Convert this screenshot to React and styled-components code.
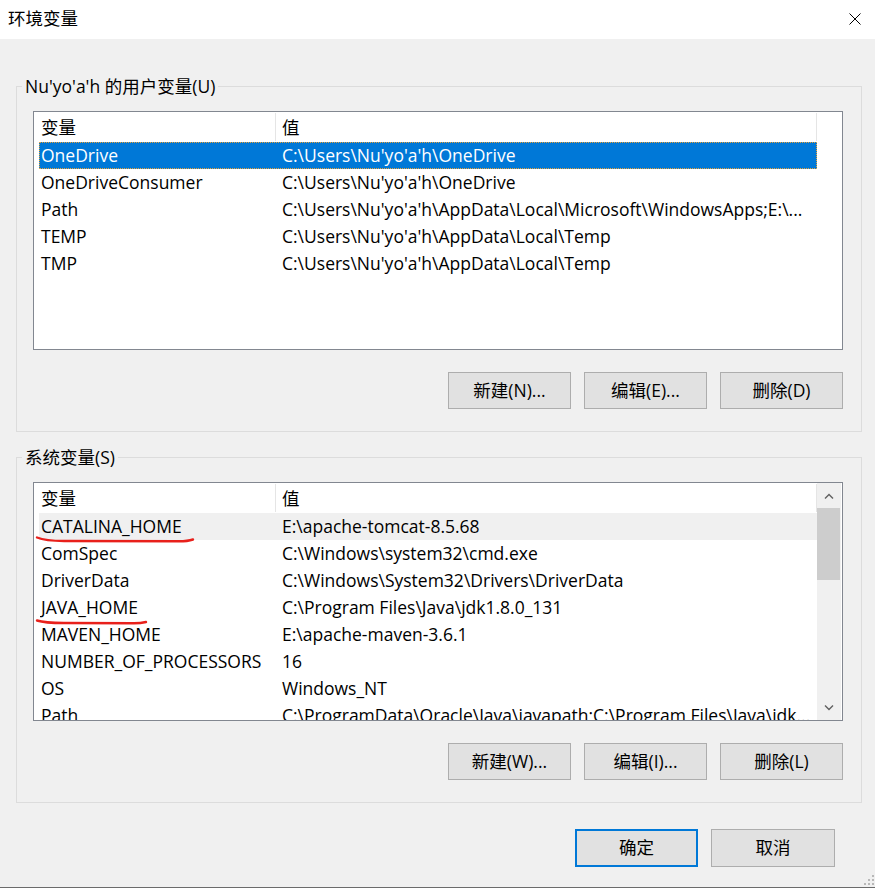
import React from 'react';
import styled, { createGlobalStyle } from 'styled-components';

const GlobalStyle = createGlobalStyle`
  html, body {
    margin: 0;
    padding: 0;
    background: #f0f0f0;
  }
  body {
    font-family: "Open Sans", "Noto Sans CJK SC", sans-serif;
    font-size: 17.5px;
    color: #000;
  }
`;

const Window = styled.div`
  position: relative;
  width: 875px;
  height: 888px;
  box-sizing: border-box;
  background: #f0f0f0;
  border-bottom: 1px solid #6b6b6b;
  overflow: hidden;
  display: flex;
  flex-direction: column;
`;

const TitleBar = styled.div`
  height: 39px;
  flex: none;
  background: #ffffff;
  display: flex;
  align-items: center;
  justify-content: space-between;
  padding: 0 14px 0 8px;
`;

const Title = styled.span`
  font-size: 17.5px;
  line-height: 1;
  margin-top: -2px;
`;

const CloseButton = styled.div`
  width: 12px;
  height: 12px;
  display: flex;
  margin-top: -2px;
`;

const Content = styled.div`
  padding-top: 35px;
  display: flex;
  flex-direction: column;
`;

const Group = styled.fieldset`
  margin: ${(p) => (p.$first ? '0' : '13px')} 0 0 16px;
  width: 846px;
  box-sizing: border-box;
  border: 1px solid #dcdcdc;
  padding: 13px 18px 22px 16px;
  min-width: 0;
`;

const Legend = styled.legend`
  padding: 0 3px;
  margin-left: -11px;
  line-height: 24px;
  font-size: 17.5px;
`;

const ListView = styled.div`
  position: relative;
  height: 239px;
  box-sizing: border-box;
  border: 1px solid #828790;
  background: #ffffff;
  display: flex;
  overflow: hidden;
`;

const ListBody = styled.div`
  width: 783px;
  flex: none;
  display: flex;
  flex-direction: column;
  overflow: hidden;
`;

const HeaderRow = styled.div`
  display: flex;
  height: 30px;
  flex: none;
  padding-top: 1px;
  box-sizing: border-box;
`;

const HeaderCell = styled.div`
  width: ${(p) => p.$width}px;
  box-sizing: border-box;
  padding-left: ${(p) => p.$pad}px;
  border-right: 1px solid #e5e5e5;
  line-height: 28px;
  height: 28px;
`;

const Row = styled.div`
  display: grid;
  grid-template-columns: 236px 542px;
  height: 27px;
  flex: none;
  margin-left: 5px;
  width: 778px;
  box-sizing: border-box;
  line-height: 25px;
  background: ${(p) =>
    p.$state === 'selected' ? '#0078d7' : p.$state === 'hover' ? '#f0f0f0' : 'transparent'};
  color: ${(p) => (p.$state === 'selected' ? '#ffffff' : '#000000')};
  border: 1px ${(p) => (p.$state === 'selected' ? 'dotted #e8a23a' : 'solid transparent')};
`;

const Cell = styled.div`
  padding-left: ${(p) => (p.$value ? 6 : 1)}px;
  white-space: nowrap;
  overflow: hidden;
  text-overflow: clip;
`;

const Scrollbar = styled.div`
  width: 24px;
  flex: none;
  background: #f0f0f0;
  display: flex;
  flex-direction: column;
`;

const ArrowBox = styled.div`
  height: 25px;
  flex: none;
  display: flex;
  align-items: center;
  justify-content: center;
`;

const Track = styled.div`
  flex: 1;
  display: flex;
  flex-direction: column;
`;

const Thumb = styled.div`
  height: 72px;
  margin: 0 1px 0 0;
  background: #cdcdcd;
`;

const Marks = styled.svg`
  position: absolute;
  left: 0;
  top: 0;
  pointer-events: none;
`;

const ButtonRow = styled.div`
  display: flex;
  justify-content: flex-end;
  gap: 13px;
  margin-top: 22px;
`;

const Button = styled.button`
  width: ${(p) => (p.$wide ? 124 : 123)}px;
  height: ${(p) => (p.$tall ? 38 : 37)}px;
  box-sizing: border-box;
  background: #e1e1e1;
  border: ${(p) => (p.$default ? '2px solid #0078d7' : '1px solid #adadad')};
  font-family: "Open Sans", "Noto Sans CJK SC", sans-serif;
  font-size: 17.5px;
  color: #000;
  padding: 0;
  line-height: 1;
  border-radius: 0;
`;

const DialogButtons = styled.div`
  display: flex;
  justify-content: flex-end;
  gap: 13px;
  padding-right: 40px;
  margin-top: 26px;
`;

const Grip = styled.svg`
  position: absolute;
  right: 1px;
  bottom: 2px;
`;

const userVars = [
  ['OneDrive', "C:\\Users\\Nu'yo'a'h\\OneDrive"],
  ['OneDriveConsumer', "C:\\Users\\Nu'yo'a'h\\OneDrive"],
  ['Path', "C:\\Users\\Nu'yo'a'h\\AppData\\Local\\Microsoft\\WindowsApps;E:\\..."],
  ['TEMP', "C:\\Users\\Nu'yo'a'h\\AppData\\Local\\Temp"],
  ['TMP', "C:\\Users\\Nu'yo'a'h\\AppData\\Local\\Temp"],
];

const systemVars = [
  ['CATALINA_HOME', 'E:\\apache-tomcat-8.5.68'],
  ['ComSpec', 'C:\\Windows\\system32\\cmd.exe'],
  ['DriverData', 'C:\\Windows\\System32\\Drivers\\DriverData'],
  ['JAVA_HOME', 'C:\\Program Files\\Java\\jdk1.8.0_131'],
  ['MAVEN_HOME', 'E:\\apache-maven-3.6.1'],
  ['NUMBER_OF_PROCESSORS', '16'],
  ['OS', 'Windows_NT'],
  ['Path', 'C:\\ProgramData\\Oracle\\Java\\javapath;C:\\Program Files\\Java\\jdk...'],
];

const Chevron = ({ up }) => (
  <svg width="10" height="6" viewBox="0 0 10 6">
    <path
      d={up ? 'M1 5.5 L5 1.5 L9 5.5' : 'M1 0.5 L5 4.5 L9 0.5'}
      fill="none"
      stroke="#606060"
      strokeWidth="1.4"
    />
  </svg>
);

const VarList = ({ rows, selected, hover, scroll, children }) => (
  <ListView>
    <ListBody>
      <HeaderRow>
        <HeaderCell $width={242} $pad={7}>变量</HeaderCell>
        <HeaderCell $width={541} $pad={6}>值</HeaderCell>
      </HeaderRow>
      {rows.map(([name, value], i) => (
        <Row
          key={name + i}
          $state={i === selected ? 'selected' : i === hover ? 'hover' : undefined}
        >
          <Cell>{name}</Cell>
          <Cell $value>{value}</Cell>
        </Row>
      ))}
    </ListBody>
    {scroll && (
      <Scrollbar>
        <ArrowBox><Chevron up /></ArrowBox>
        <Track><Thumb /></Track>
        <ArrowBox><Chevron /></ArrowBox>
      </Scrollbar>
    )}
    {children}
  </ListView>
);

export default function App() {
  return (
    <Window>
      <GlobalStyle />
      <TitleBar>
        <Title>环境变量</Title>
        <CloseButton>
          <svg width="12" height="12" viewBox="0 0 12 12">
            <path d="M0.5 0.5 L11.5 11.5 M11.5 0.5 L0.5 11.5" stroke="#000" strokeWidth="1" />
          </svg>
        </CloseButton>
      </TitleBar>
      <Content>
        <Group $first>
          <Legend>Nu'yo'a'h 的用户变量(U)</Legend>
          <VarList rows={userVars} selected={0} />
          <ButtonRow>
            <Button>新建(N)...</Button>
            <Button>编辑(E)...</Button>
            <Button>删除(D)</Button>
          </ButtonRow>
        </Group>
        <Group>
          <Legend>系统变量(S)</Legend>
          <VarList rows={systemVars} hover={0} scroll>
            <Marks width="200" height="160" viewBox="0 0 200 160">
              <path
                d="M3 54.5 C 9 57, 16 58, 30 58 L 145 58.3 C 152 58.3, 156 57.5, 159 56.5"
                fill="none"
                stroke="#e8201b"
                strokeWidth="2.4"
                strokeLinecap="round"
              />
              <path
                d="M3 137.5 C 9 139.5, 16 140, 30 140 L 100 140.3 C 106 140.3, 110 139.5, 112 139"
                fill="none"
                stroke="#e8201b"
                strokeWidth="2.4"
                strokeLinecap="round"
              />
            </Marks>
          </VarList>
          <ButtonRow>
            <Button>新建(W)...</Button>
            <Button>编辑(I)...</Button>
            <Button>删除(L)</Button>
          </ButtonRow>
        </Group>
        <DialogButtons>
          <Button $default $tall>确定</Button>
          <Button $wide $tall>取消</Button>
        </DialogButtons>
      </Content>
      <Grip width="10" height="10" viewBox="0 0 10 10">
        <rect x="8" y="0" width="2" height="2" fill="#b8b8b8" />
        <rect x="4" y="4" width="2" height="2" fill="#b8b8b8" />
        <rect x="8" y="4" width="2" height="2" fill="#b8b8b8" />
        <rect x="0" y="8" width="2" height="2" fill="#b8b8b8" />
        <rect x="4" y="8" width="2" height="2" fill="#b8b8b8" />
        <rect x="8" y="8" width="2" height="2" fill="#b8b8b8" />
      </Grip>
    </Window>
  );
}
